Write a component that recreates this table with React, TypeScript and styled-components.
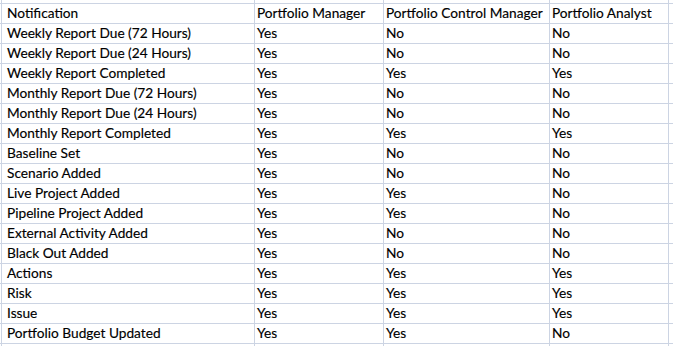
import * as React from "react";
import styled, { createGlobalStyle } from "styled-components";

const GlobalStyle = createGlobalStyle`
  html, body {
    margin: 0;
    padding: 0;
    background: #ffffff;
    overflow: hidden;
  }
`;

const rows: string[][] = [
  ["Notification", "Portfolio Manager", "Portfolio Control Manager", "Portfolio Analyst"],
  ["Weekly Report Due (72 Hours)", "Yes", "No", "No"],
  ["Weekly Report Due (24 Hours)", "Yes", "No", "No"],
  ["Weekly Report Completed", "Yes", "Yes", "Yes"],
  ["Monthly Report Due (72 Hours)", "Yes", "No", "No"],
  ["Monthly Report Due (24 Hours)", "Yes", "No", "No"],
  ["Monthly Report Completed", "Yes", "Yes", "Yes"],
  ["Baseline Set", "Yes", "No", "No"],
  ["Scenario Added", "Yes", "No", "No"],
  ["Live Project Added", "Yes", "Yes", "No"],
  ["Pipeline Project Added", "Yes", "Yes", "No"],
  ["External Activity Added", "Yes", "No", "No"],
  ["Black Out Added", "Yes", "No", "No"],
  ["Actions", "Yes", "Yes", "Yes"],
  ["Risk", "Yes", "Yes", "Yes"],
  ["Issue", "Yes", "Yes", "Yes"],
  ["Portfolio Budget Updated", "Yes", "Yes", "No"],
];

function App() {
  return (
    <>
      <GlobalStyle />
      <Sheet>
        {/* partial row cut off at the top */}
        {Array.from({ length: 6 }).map((_, i) => (
          <Cell key={`top-${i}`} />
        ))}
        {rows.map((row, r) => (
          <React.Fragment key={r}>
            <Cell />
            {row.map((text, c) => (
              <Cell key={c} $indent={c === 0 ? 5 : 2}>
                {text}
              </Cell>
            ))}
            <Cell />
          </React.Fragment>
        ))}
        {/* partial row cut off at the bottom */}
        {Array.from({ length: 6 }).map((_, i) => (
          <Cell key={`bottom-${i}`} />
        ))}
      </Sheet>
    </>
  );
}

const Sheet = styled.div`
  display: grid;
  grid-template-columns: 1px 252px 128px 165px 118px 1fr;
  grid-template-rows: 3px repeat(17, 19px) 1fr;
  gap: 1px;
  width: 673px;
  height: 346px;
  background-color: #ccd4e3;
  overflow: hidden;
`;

const Cell = styled.div<{ $indent?: number }>`
  background-color: #ffffff;
  display: flex;
  align-items: flex-end;
  padding-left: ${(p) => p.$indent ?? 0}px;
  padding-bottom: 1px;
  overflow: hidden;
  white-space: nowrap;
  font-family: Lato, "Open Sans", sans-serif;
  font-size: 13.7px;
  line-height: 19px;
  color: #000000;
  -webkit-text-stroke: 0.15px #000000;
`;

export default App;
